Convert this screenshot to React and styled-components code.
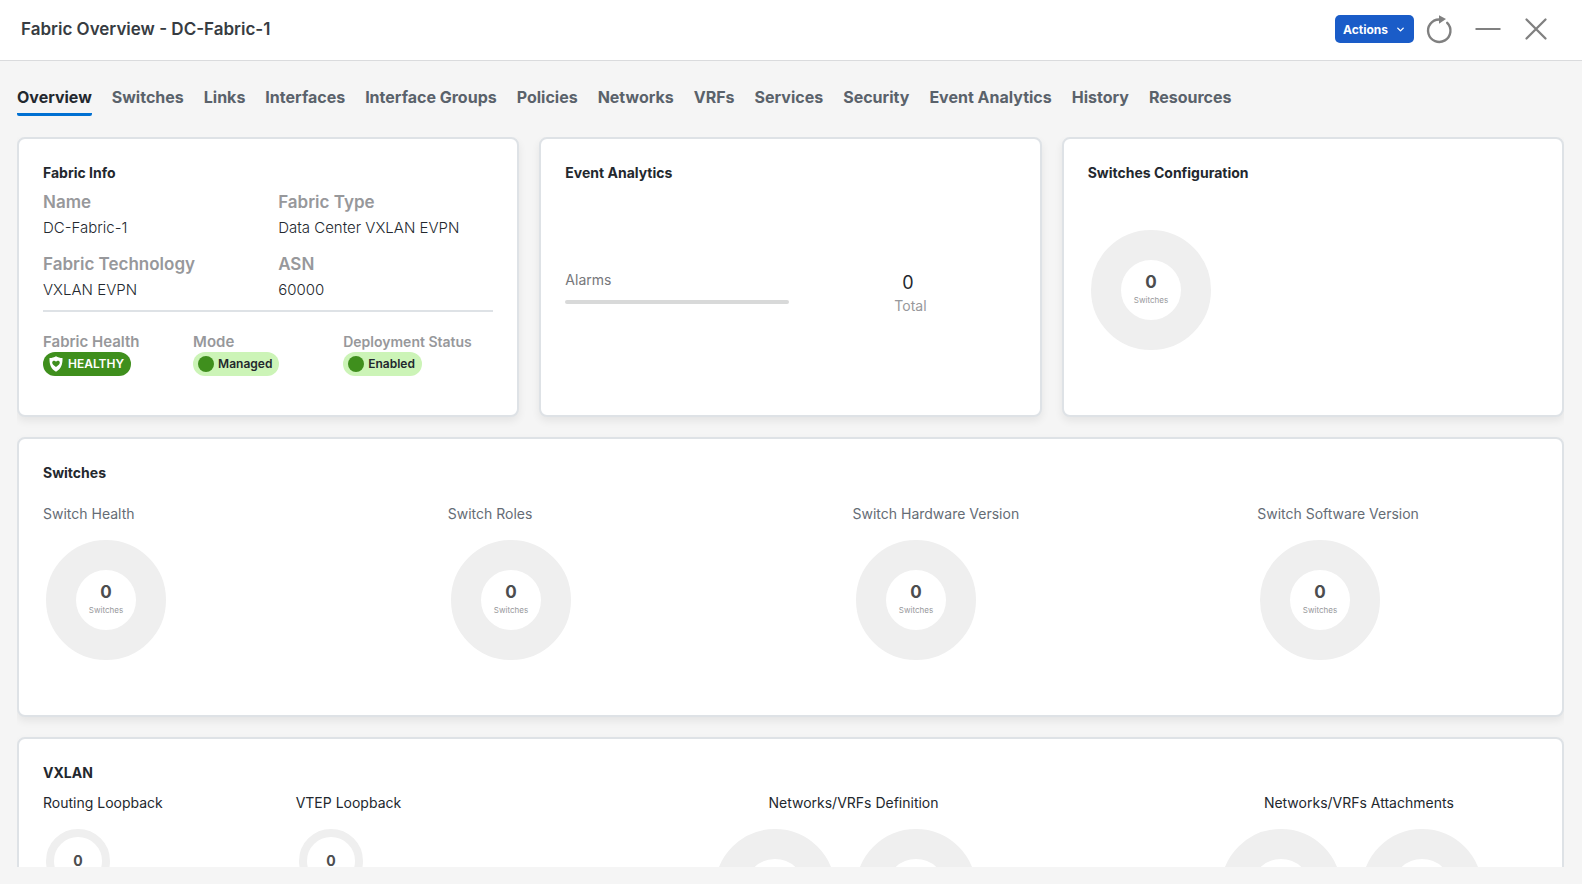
import React, { useState } from 'react';
import styled, { createGlobalStyle } from 'styled-components';
import { ChevronDown } from 'lucide-react';

const GlobalStyle = createGlobalStyle`
  * {
    box-sizing: border-box;
  }

  body {
    background: #f5f5f5;
    color: #23282e;
    font-family: Inter, 'Liberation Sans', sans-serif;
    font-size: 14px;
    line-height: 20px;
    margin: 0;
  }

  button {
    background: none;
    border: 0;
    cursor: pointer;
    font-family: inherit;
    padding: 0;
  }

  h1,
  h2,
  h3,
  dl,
  dd {
    margin: 0;
  }
`;

const Page = styled.div`
  display: flex;
  flex-direction: column;
  height: 100vh;
  padding-bottom: 17px;
`;

const Header = styled.header`
  align-items: center;
  background: #fff;
  border-bottom: 1px solid #dadbdd;
  display: flex;
  flex: none;
  height: 61px;
  justify-content: space-between;
  padding: 0 30px 2px 21px;
`;

const PageTitle = styled.h1`
  color: #373c42;
  font-size: 17px;
  font-weight: 600;
  line-height: 24px;
`;

const HeaderActions = styled.div`
  align-items: center;
  display: flex;
`;

const ActionsBtn = styled.button`
  align-items: center;
  background: #1a5cc8;
  border-radius: 5px;
  color: #fff;
  display: flex;
  font-size: 12px;
  font-weight: 700;
  gap: 7px;
  height: 28px;
  margin-right: 10px;
  padding: 0 8px;
`;

const IconBtn = styled.button`
  display: flex;
  height: 32px;
  margin-right: ${({ $spaced }) => ($spaced ? '16px' : 0)};
  width: 32px;
`;

const Tabs = styled.nav`
  display: flex;
  flex: none;
  gap: 20px;
  padding: 24px 17px 21px;
`;

const Tab = styled.button`
  border-bottom: 3px solid transparent;
  border-radius: 2px;
  color: #5a626b;
  font-size: 16px;
  font-weight: 700;
  line-height: 24px;
  padding-bottom: 4px;
  white-space: nowrap;

  &[aria-current='page'] {
    border-color: #0070d2;
    color: #23282e;
  }
`;

const Content = styled.main`
  display: flex;
  flex: 1;
  flex-direction: column;
  gap: 20px;
  margin: 0 18px 0 17px;
  min-height: 0;
  overflow: hidden;
`;

const CardRow = styled.div`
  display: grid;
  flex: none;
  gap: 20px;
  grid-template-columns: repeat(3, 1fr);
`;

const Card = styled.section`
  background: #fff;
  border: 2px solid #dee2e6;
  border-radius: 8px;
  box-shadow: 0 4px 8px rgba(0, 0, 0, 0.07);
  display: flex;
  flex: none;
  flex-direction: column;
  min-height: 280px;
  padding: 24px;
`;

const CardTitle = styled.h2`
  font-size: 14px;
  font-weight: 700;
  line-height: 20px;
`;

const InfoGrid = styled.dl`
  border-bottom: 2px solid #dee2e6;
  column-gap: 20px;
  display: grid;
  grid-template-columns: 1fr 1fr;
  padding: 6px 0 7px;
  row-gap: 10px;
`;

const InfoLabel = styled.dt`
  color: #97989b;
  font-size: ${({ $size }) => $size || 17}px;
  font-weight: 600;
  line-height: ${({ $size }) => ($size ? 20 : 26)}px;
`;

const InfoValue = styled.dd`
  font-size: 15px;
  font-weight: 300;
  line-height: 26px;
`;

const StatusGrid = styled.dl`
  display: grid;
  grid-template-columns: repeat(3, 1fr);
  padding-top: 20px;
`;

const Pill = styled.dd`
  align-items: center;
  background: ${({ $solid }) => ($solid ? '#3f8f1d' : '#ccf4b7')};
  border-radius: 12px;
  color: ${({ $solid }) => ($solid ? '#fff' : '#23282e')};
  display: flex;
  font-size: 12px;
  font-weight: 600;
  gap: 4px;
  height: 24px;
  padding: 0 7px 0 5px;
  width: fit-content;
`;

const Dot = styled.span`
  background: #3f8f1d;
  border-radius: 50%;
  height: 16px;
  width: 16px;
`;

const AlarmRow = styled.div`
  align-content: center;
  align-items: start;
  display: grid;
  flex: 1;
  gap: 16px;
  grid-template-columns: 224px 1fr;
  padding-top: 12px;
`;

const Alarms = styled.div`
  color: #76777b;
  font-size: 14px;
`;

const Bar = styled.div`
  background: #d8d9d9;
  border-radius: 2px;
  height: 4px;
  margin-top: 10px;
`;

const Total = styled.div`
  color: #97989b;
  justify-self: center;
`;

const TotalValue = styled.div`
  color: #23282e;
  font-size: 18px;
  line-height: 26px;
  padding-left: 8px;
`;

const ConfigChart = styled.div`
  padding-top: 44px;
`;

const ChartGrid = styled.div`
  column-gap: 124px;
  display: grid;
  grid-template-columns: repeat(4, 1fr);
  padding-top: 21px;
`;

const ChartTitle = styled.h3`
  color: ${({ $muted }) => ($muted ? '#656c75' : '#23282e')};
  font-size: 14px;
  font-weight: 400;
  line-height: 20px;
  margin-bottom: 13px;
  white-space: nowrap;
`;

const VxlanGrid = styled.div`
  display: grid;
  gap: 21px;
  grid-template-columns: repeat(6, 1fr);
  padding-top: 10px;
`;

const ChartGroup = styled.div`
  align-items: center;
  display: flex;
  flex-direction: column;
  grid-column: span 2;
  padding-left: 126px;
`;

const DonutPair = styled.div`
  display: flex;
  gap: 15px;
  padding-right: 15px;
`;

const DonutSvg = styled.svg`
  display: block;
`;

const TABS = [
  'Overview',
  'Switches',
  'Links',
  'Interfaces',
  'Interface Groups',
  'Policies',
  'Networks',
  'VRFs',
  'Services',
  'Security',
  'Event Analytics',
  'History',
  'Resources',
];

const FABRIC_INFO = [
  ['Name', 'DC-Fabric-1'],
  ['Fabric Type', 'Data Center VXLAN EVPN'],
  ['Fabric Technology', 'VXLAN EVPN'],
  ['ASN', '60000'],
];

const SWITCH_CHARTS = [
  'Switch Health',
  'Switch Roles',
  'Switch Hardware Version',
  'Switch Software Version',
];

function Donut({ value = 0, label = 'Switches', size = 120, ring = 30 }) {
  const box = size + 6;
  const center = box / 2;
  const large = size > 100;

  return (
    <DonutSvg width={box} height={box} role="img" aria-label={`${value} ${label}`}>
      <circle
        cx={center}
        cy={center}
        r={(size - ring) / 2}
        fill="none"
        stroke="#efefef"
        strokeWidth={ring}
      />
      <text
        x={center}
        y={large ? center - 2 : center + 5}
        fill="#4c4d4f"
        fontSize={large ? 17 : 14}
        fontWeight="700"
        textAnchor="middle"
      >
        {value}
      </text>
      {large && (
        <text
          x={center}
          y={center + 13}
          fill="#97989b"
          fontSize="8"
          textAnchor="middle"
        >
          {label}
        </text>
      )}
    </DonutSvg>
  );
}

function RefreshIcon() {
  return (
    <svg width="32" height="32" fill="none" stroke="#808080" strokeWidth="2.4">
      <path d="M15 6.5A11.2 11.2 0 1 0 23.2 9.8" strokeLinecap="round" />
      <path d="M15 2.2v8.6l7-4.800z" fill="#808080" stroke="none" />
    </svg>
  );
}

function MinimizeIcon() {
  return (
    <svg width="32" height="32" stroke="#808080" strokeWidth="2">
      <path d="M3.5 16h25" />
    </svg>
  );
}

function CloseIcon() {
  return (
    <svg width="32" height="32" stroke="#808080" strokeWidth="2.3" strokeLinecap="round">
      <path d="M6.5 6.5l19 19M25.5 6.5l-19 19" />
    </svg>
  );
}

function ShieldIcon() {
  return (
    <svg width="16" height="16" viewBox="0 0 16 16">
      <path
        fill="#fff"
        d="M8 .3C9.9 1.5 12 2 14.5 2.1 14.7 8.2 13.3 13 8 15.8 2.7 13 1.3 8.2 1.5 2.1 4 2 6.1 1.5 8 .3z"
      />
      <path
        fill="#3f8f1d"
        d="M8 11C5.6 9.3 4.2 8.1 4.2 6.5c0-1.9 2.7-2.5 3.8-.8 1.1-1.7 3.8-1.1 3.8.8C11.8 8.1 10.4 9.3 8 11z"
      />
    </svg>
  );
}

function FabricInfo() {
  return (
    <Card>
      <CardTitle>Fabric Info</CardTitle>
      <InfoGrid>
        {FABRIC_INFO.map(([label, value]) => (
          <div key={label}>
            <InfoLabel>{label}</InfoLabel>
            <InfoValue>{value}</InfoValue>
          </div>
        ))}
      </InfoGrid>
      <StatusGrid>
        <div>
          <InfoLabel $size={15}>Fabric Health</InfoLabel>
          <Pill $solid>
            <ShieldIcon />
            HEALTHY
          </Pill>
        </div>
        <div>
          <InfoLabel $size={15}>Mode</InfoLabel>
          <Pill>
            <Dot />
            Managed
          </Pill>
        </div>
        <div>
          <InfoLabel $size={14}>Deployment Status</InfoLabel>
          <Pill>
            <Dot />
            Enabled
          </Pill>
        </div>
      </StatusGrid>
    </Card>
  );
}

function EventAnalytics() {
  return (
    <Card>
      <CardTitle>Event Analytics</CardTitle>
      <AlarmRow>
        <Alarms>
          Alarms
          <Bar />
        </Alarms>
        <Total>
          <TotalValue>0</TotalValue>
          Total
        </Total>
      </AlarmRow>
    </Card>
  );
}

function Vxlan() {
  return (
    <Card>
      <CardTitle>VXLAN</CardTitle>
      <VxlanGrid>
        {['Routing Loopback', 'VTEP Loopback'].map((title) => (
          <div key={title}>
            <ChartTitle>{title}</ChartTitle>
            <Donut size={64} ring={8} label={title} />
          </div>
        ))}
        {['Networks/VRFs Definition', 'Networks/VRFs Attachments'].map((title) => (
          <ChartGroup key={title}>
            <ChartTitle>{title}</ChartTitle>
            <DonutPair>
              <Donut label="Networks" />
              <Donut label="VRFs" />
            </DonutPair>
          </ChartGroup>
        ))}
      </VxlanGrid>
    </Card>
  );
}

function App() {
  const [activeTab, setActiveTab] = useState('Overview');

  return (
    <>
      <GlobalStyle />
      <Page>
        <Header>
          <PageTitle>Fabric Overview - DC-Fabric-1</PageTitle>
          <HeaderActions>
            <ActionsBtn type="button">
              Actions
              <ChevronDown size={11} strokeWidth={3} />
            </ActionsBtn>
            <IconBtn type="button" aria-label="Refresh" $spaced>
              <RefreshIcon />
            </IconBtn>
            <IconBtn type="button" aria-label="Minimize" $spaced>
              <MinimizeIcon />
            </IconBtn>
            <IconBtn type="button" aria-label="Close">
              <CloseIcon />
            </IconBtn>
          </HeaderActions>
        </Header>
        <Tabs>
          {TABS.map((tab) => (
            <Tab
              type="button"
              key={tab}
              aria-current={tab === activeTab ? 'page' : undefined}
              onClick={() => setActiveTab(tab)}
            >
              {tab}
            </Tab>
          ))}
        </Tabs>
        <Content>
          <CardRow>
            <FabricInfo />
            <EventAnalytics />
            <Card>
              <CardTitle>Switches Configuration</CardTitle>
              <ConfigChart>
                <Donut />
              </ConfigChart>
            </Card>
          </CardRow>
          <Card>
            <CardTitle>Switches</CardTitle>
            <ChartGrid>
              {SWITCH_CHARTS.map((title) => (
                <div key={title}>
                  <ChartTitle $muted>{title}</ChartTitle>
                  <Donut />
                </div>
              ))}
            </ChartGrid>
          </Card>
          <Vxlan />
        </Content>
      </Page>
    </>
  );
}

export default App;
